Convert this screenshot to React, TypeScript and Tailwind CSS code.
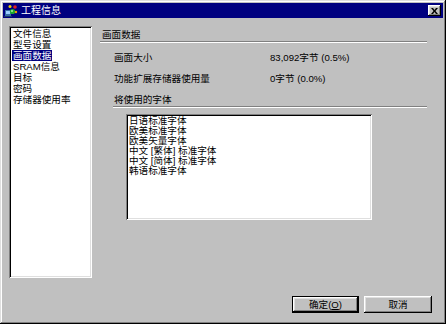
const font = "font-['Liberation_Sans','Noto_Sans_CJK_SC',sans-serif]";

const navItems = ["文件信息", "型号设置", "画面数据", "SRAM信息", "目标", "密码", "存储器使用率"];
const fonts = ["日语标准字体", "欧美标准字体", "欧美矢量字体", "中文 [繁体] 标准字体", "中文 [简体] 标准字体", "韩语标准字体"];

const AppIcon = () => (
  <svg width="14" height="14" viewBox="0 0 14 14">
    <rect x="1" y="6" width="6" height="6" fill="#3a6ea5" />
    <rect x="2" y="7" width="4" height="3" fill="#9fd0ff" />
    <rect x="0" y="12" width="8" height="1" fill="#1b3b66" />
    <circle cx="8.5" cy="7.5" r="2.6" fill="#1fa82f" />
    <circle cx="8" cy="7" r="1" fill="#a8f0a0" />
    <circle cx="11" cy="3" r="1.8" fill="#e02020" />
    <circle cx="6" cy="2.5" r="1.5" fill="#f0d000" />
    <circle cx="12" cy="8" r="1.2" fill="#f0a000" />
  </svg>
);

const Etched = ({ className = "" }: { className?: string }) => (
  <div className={`h-[2px] border-t border-[#808080] border-b border-b-white ${className}`} />
);

const sunken =
  "shadow-[inset_1px_1px_#808080,inset_-1px_-1px_#ffffff,inset_2px_2px_#000000,inset_-2px_-2px_#dfdfdf]";
const raised =
  "shadow-[inset_-1px_-1px_#000000,inset_1px_1px_#ffffff,inset_-2px_-2px_#808080,inset_2px_2px_#dfdfdf]";

export default function App() {
  return (
    <div
      className={`w-[446px] h-[324px] bg-[#c0c0c0] p-[3px] flex flex-col text-black text-[9.6px] ${font} shadow-[inset_-1px_-1px_#000000,inset_1px_1px_#dfdfdf,inset_-2px_-2px_#808080,inset_2px_2px_#ffffff]`}
    >
      {/* title bar */}
      <div className="h-[15px] bg-[#000080] flex items-center pl-[1px] pr-[2px]">
        <AppIcon />
        <span className="ml-[3px] text-white text-[10px] leading-[15px]">工程信息</span>
        <div className={`ml-auto w-[13px] h-[11px] bg-[#c0c0c0] flex items-center justify-center ${raised}`}>
          <svg width="7" height="6" viewBox="0 0 7 6">
            <path d="M0 0h2l1.5 2L5 0h2L4.5 3L7 6H5L3.5 4L2 6H0l2.5-3z" fill="#000" />
          </svg>
        </div>
      </div>

      <div className="flex mt-[8px] pl-[6px]">
        {/* left nav list */}
        <div className={`w-[83px] h-[252px] bg-white pt-[2px] pl-[4px] ${sunken}`}>
          {navItems.map((item) => (
            <div key={item} className="h-[11px] leading-[11px]">
              <span className={item === "画面数据" ? "bg-[#000080] text-white px-[1px] -ml-[1px] inline-block" : ""}>
                {item}
              </span>
            </div>
          ))}
        </div>

        {/* right panel */}
        <div className="ml-[8px] w-[327px] flex flex-col">
          <div className="pl-[2px] pt-[3px] leading-[11px]">画面数据</div>
          <Etched className="mt-[1px]" />
          <div className="pl-[14px] flex flex-col">
            <div className="flex mt-[9px] leading-[11px]">
              <span className="w-[156px]">画面大小</span>
              <span>83,092字节 (0.5%)</span>
            </div>
            <div className="flex mt-[10px] leading-[11px]">
              <span className="w-[156px]">功能扩展存储器使用量</span>
              <span>0字节 (0.0%)</span>
            </div>
            <div className="mt-[10px] leading-[11px]">将使用的字体</div>
          </div>
          <Etched className="ml-[13px] mt-[1px]" />
          <div className={`ml-[26px] mt-[6px] w-[246px] h-[106px] bg-white pt-[2px] pl-[3px] ${sunken}`}>
            {fonts.map((f) => (
              <div key={f} className="h-[10px] leading-[10px] whitespace-nowrap">
                {f}
              </div>
            ))}
          </div>
        </div>
      </div>

      {/* buttons */}
      <div className="flex justify-end gap-[5px] mt-[18px] pr-[11px]">
        <div className="w-[67px] h-[17px] border border-black">
          <div className={`w-full h-full flex items-center justify-center leading-[11px] ${raised}`}>
            <span>
              确定(<span className="underline">O</span>)
            </span>
          </div>
        </div>
        <div className={`w-[68px] h-[17px] flex items-center justify-center leading-[11px] ${raised}`}>
          取消
        </div>
      </div>
    </div>
  );
}
